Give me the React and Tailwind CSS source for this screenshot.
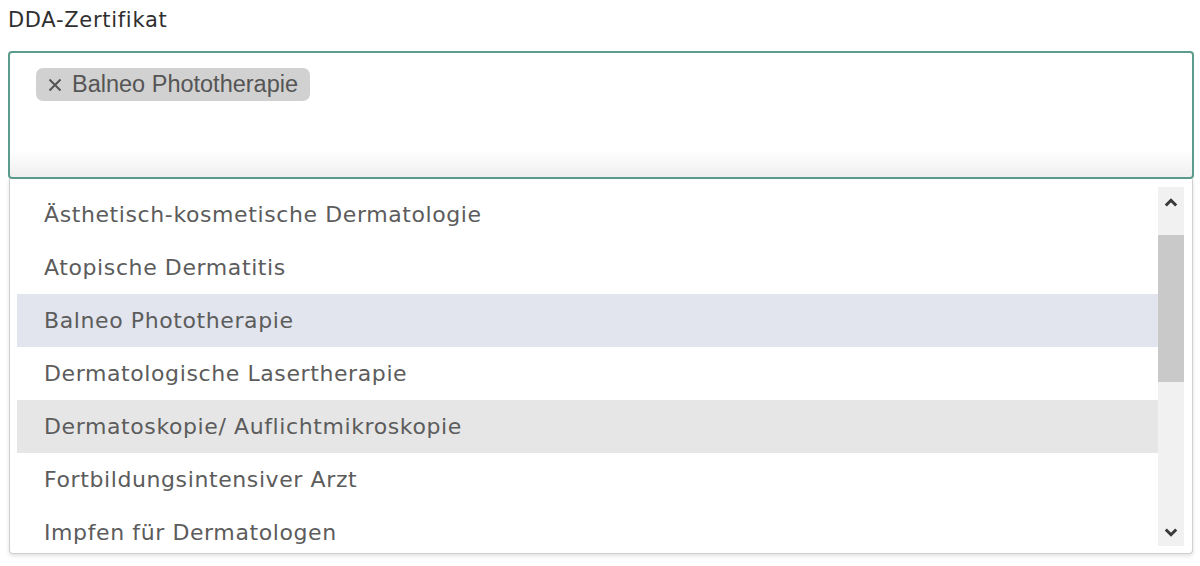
import React from "react";

const items = [
  { label: "Ästhetisch-kosmetische Dermatologie", bg: "" },
  { label: "Atopische Dermatitis", bg: "" },
  { label: "Balneo Phototherapie", bg: "bg-[#e2e5ed]" },
  { label: "Dermatologische Lasertherapie", bg: "" },
  { label: "Dermatoskopie/ Auflichtmikroskopie", bg: "bg-[#e6e6e6]" },
  { label: "Fortbildungsintensiver Arzt", bg: "" },
  { label: "Impfen für Dermatologen", bg: "" },
];

export default function App() {
  return (
    <div className="w-[1200px] h-[566px] bg-white overflow-hidden font-['DejaVu_Sans',sans-serif]">
      <div className="pl-[8px] pt-[5px] h-[51px] text-[21px] leading-[30px] tracking-[0.7px] text-[#2f2f2f]">
        DDA-Zertifikat
      </div>
      <div className="ml-[8px] w-[1186px] h-[128px] border-2 border-[#5b9c8c] rounded-[4px] bg-gradient-to-b from-white from-78% to-[#efefef] pt-[15px] pl-[26px]">
        <span className="inline-flex items-center h-[33px] pl-[12px] pr-[12px] rounded-[7px] bg-[#d1d1d1] text-[#555] font-['Liberation_Sans',sans-serif] text-[23.5px]">
          <svg width="14" height="14" viewBox="0 0 14 14" className="mr-[10px]">
            <path d="M1.5 1.5 L12.5 12.5 M12.5 1.5 L1.5 12.5" stroke="#555" strokeWidth="2" fill="none" />
          </svg>
          Balneo Phototherapie
        </span>
      </div>
      <div className="ml-[9px] w-[1184px] h-[375px] border border-t-0 border-[#cfcfcf] rounded-b-[4px] shadow-[0_2px_4px_rgba(0,0,0,0.12)] bg-white flex pl-[7px] pt-[9px] pr-[8px] overflow-hidden">
        <div className="flex-1 overflow-hidden">
          {items.map((it) => (
            <div
              key={it.label}
              className={`h-[53px] flex items-center pl-[27px] text-[22px] tracking-[0.6px] text-[#5c5c5c] ${it.bg}`}
            >
              {it.label}
            </div>
          ))}
        </div>
        <div className="w-[26px] h-[359px] mt-[-1px] bg-[#f1f1f1] flex flex-col">
          <div className="h-[48px] flex justify-center pt-[11px]">
            <svg width="14" height="9" viewBox="0 0 14 9">
              <path d="M1.8 7.5 L7 2.3 L12.2 7.5" fill="none" stroke="#3a3a3a" strokeWidth="3" />
            </svg>
          </div>
          <div className="h-[147px] bg-[#c9c9c9]"></div>
          <div className="flex-1 flex items-end justify-center pb-[9px]">
            <svg width="14" height="9" viewBox="0 0 14 9">
              <path d="M1.8 1.5 L7 6.7 L12.2 1.5" fill="none" stroke="#3a3a3a" strokeWidth="3" />
            </svg>
          </div>
        </div>
      </div>
    </div>
  );
}
